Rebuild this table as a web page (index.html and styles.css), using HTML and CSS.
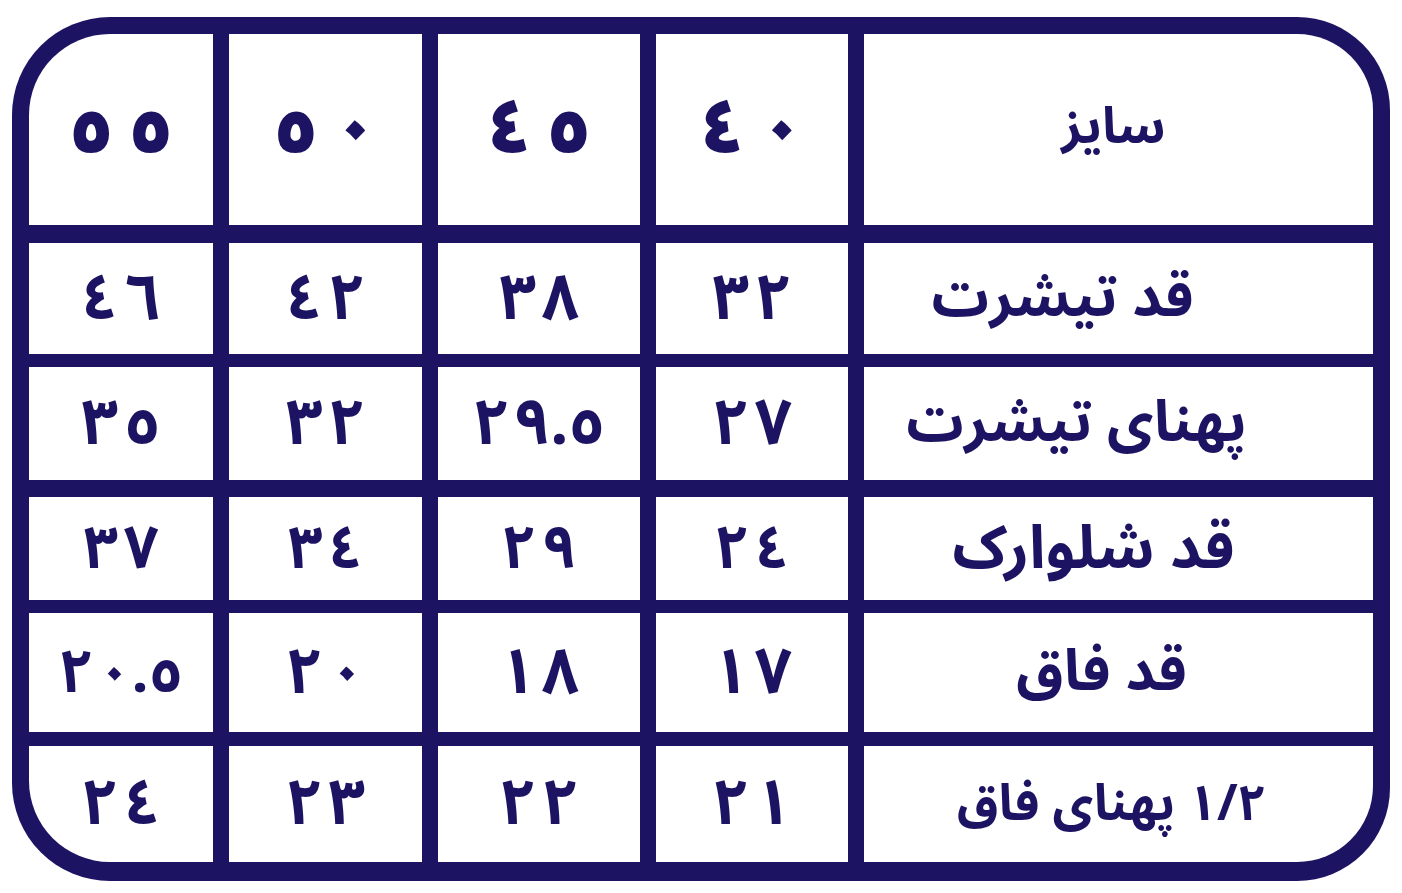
FILE: index.html
```html
<!DOCTYPE html>
<html lang="fa">
<head>
<meta charset="utf-8">
<title>جدول سایز</title>
<link rel="stylesheet" href="styles.css">
</head>
<body>
<div class="chart" dir="rtl">
  <div class="row row-head">
    <div class="cell label head-label">سایز</div>
    <div class="cell num head-num"><span>٤</span><span>٠</span></div>
    <div class="cell num head-num"><span>٤</span><span>٥</span></div>
    <div class="cell num head-num"><span>٥</span><span>٠</span></div>
    <div class="cell num head-num"><span>٥</span><span>٥</span></div>
  </div>
  <div class="row row-1">
    <div class="cell label">قد تیشرت</div>
    <div class="cell num"><span>٣</span><span>٢</span></div>
    <div class="cell num"><span>٣</span><span>٨</span></div>
    <div class="cell num"><span>٤</span><span>٢</span></div>
    <div class="cell num"><span>٤</span><span>٦</span></div>
  </div>
  <div class="row row-2">
    <div class="cell label">پهنای تیشرت</div>
    <div class="cell num"><span>٢</span><span>٧</span></div>
    <div class="cell num num-tight"><span>٢</span><span>٩.٥</span></div>
    <div class="cell num"><span>٣</span><span>٢</span></div>
    <div class="cell num"><span>٣</span><span>٥</span></div>
  </div>
  <div class="row row-3">
    <div class="cell label">قد شلوارک</div>
    <div class="cell num"><span>٢</span><span>٤</span></div>
    <div class="cell num"><span>٢</span><span>٩</span></div>
    <div class="cell num"><span>٣</span><span>٤</span></div>
    <div class="cell num"><span>٣</span><span>٧</span></div>
  </div>
  <div class="row row-4">
    <div class="cell label">قد فاق</div>
    <div class="cell num"><span>١</span><span>٧</span></div>
    <div class="cell num"><span>١</span><span>٨</span></div>
    <div class="cell num"><span>٢</span><span>٠</span></div>
    <div class="cell num num-tight num-small"><span>٢</span><span>٠.٥</span></div>
  </div>
  <div class="row row-5">
    <div class="cell label">۱/۲ پهنای فاق</div>
    <div class="cell num"><span>٢</span><span>١</span></div>
    <div class="cell num"><span>٢</span><span>٢</span></div>
    <div class="cell num"><span>٢</span><span>٣</span></div>
    <div class="cell num"><span>٢</span><span>٤</span></div>
  </div>
</div>
</body>
</html>
```
FILE: styles.css
```css
* { box-sizing: border-box; }

html, body {
  margin: 0;
  padding: 0;
  background: #ffffff;
}

body {
  font-family: "Noto Sans Arabic", "DejaVu Sans", sans-serif;
  color: #1c1463;
}

.chart {
  margin: 17px 0 0 12px;
  width: 1378px;
  height: 864px;
  background: #1c1463;
  border-top-left-radius: 98px;
  border-top-right-radius: 93px;
  border-bottom-right-radius: 93px;
  border-bottom-left-radius: 98px;
  padding: 17px 17px 19px 17px;
  display: flex;
  flex-direction: column;
}

.row {
  display: grid;
  grid-template-columns: 509px 192px 202px 193px 184px;
  column-gap: 16px;
}

.row-head { height: 191px; }
.row-1 { height: 111px; margin-top: 18px; }
.row-2 { height: 113px; margin-top: 13px; }
.row-3 { height: 103px; margin-top: 17px; }
.row-4 { height: 119px; margin-top: 13px; }
.row-5 { height: 116px; margin-top: 14px; }

.cell {
  background: #ffffff;
  display: flex;
  align-items: center;
  justify-content: center;
  white-space: nowrap;
  line-height: 1;
}

.row-head .cell:first-child { border-top-right-radius: 76px; }
.row-head .cell:last-child { border-top-left-radius: 81px; }
.row-5 .cell:first-child { border-bottom-right-radius: 76px; }
.row-5 .cell:last-child { border-bottom-left-radius: 81px; }

.label {
  font-size: 57px;
  font-weight: bold;
}

.row-1 .label { padding-right: 112px; }
.row-2 .label { padding-right: 84px; }
.row-3 .label { padding-right: 50px; font-size: 60px; }
.row-4 .label { padding-right: 34px; }
.row-5 .label { padding-right: 14px; font-size: 50px; }

.head-label {
  font-size: 50px;
  padding-right: 10px;
  padding-bottom: 6px;
}

.num {
  direction: ltr;
  font-size: 64px;
  font-weight: bold;
  gap: 6px;
}

.row-3 .num { font-size: 60px; }

.num-tight { gap: 4px; }
.num-small { font-size: 60px; }

.head-num {
  font-size: 76px;
  font-weight: 900;
  gap: 15px;
  padding-bottom: 2px;
}
```
